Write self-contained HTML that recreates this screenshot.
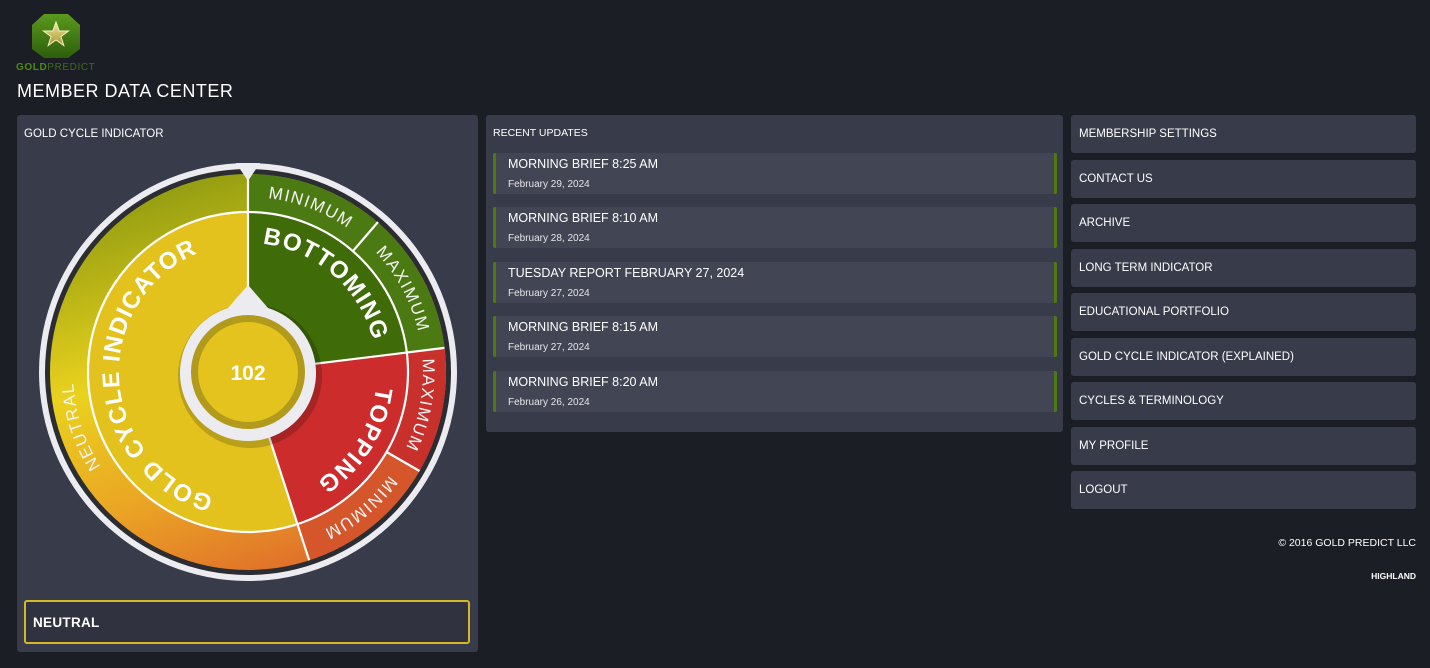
<!DOCTYPE html>
<html><head><meta charset="utf-8"><style>
*{margin:0;padding:0;box-sizing:border-box}
body{width:1430px;height:668px;background:#1c1e25;font-family:"Liberation Sans",sans-serif;color:#fff;position:relative;overflow:hidden}
.abs{position:absolute}
.panel{background:#383c4a;border-radius:3px}
.item{position:absolute;left:493px;width:564px;height:41px;background:#424654;border-left:3px solid #4c7a10;border-right:3px solid #4c7a10;border-radius:2px}
.item .t{position:absolute;left:12px;top:4px;font-size:12.5px}
.item .d{position:absolute;left:12px;top:26px;font-size:10px;color:#e6e6ea}
.btn{position:absolute;left:1071px;width:345px;height:38px;background:#383c4a;border-radius:3px;font-size:11.5px;padding:13px 0 0 8px}
</style></head><body>
<svg class="abs" style="left:30px;top:13px" width="52" height="46" viewBox="0 0 52 46">
<defs><linearGradient id="lg" x1="0" y1="0" x2="0" y2="1"><stop offset="0" stop-color="#5a9a1c"/><stop offset="1" stop-color="#2e5e0c"/></linearGradient>
<linearGradient id="st" x1="0" y1="0" x2="0" y2="1"><stop offset="0" stop-color="#efe8a0"/><stop offset="1" stop-color="#a8962a"/></linearGradient></defs>
<path d="M14 1 L38 1 L50 12 L50 36 L38 45 L14 45 L2 36 L2 12 Z" fill="url(#lg)"/>
<path d="M26 9 L29.2 18 L38.5 18 L31 23.6 L33.8 32.5 L26 27 L18.2 32.5 L21 23.6 L13.5 18 L22.8 18 Z" fill="url(#st)" stroke="#f4f0c8" stroke-width="1"/>
</svg>
<div class="abs" style="left:16px;top:62px;font-size:10px;letter-spacing:0.6px;color:#3e6a1c"><b style="color:#4c8a1a">GOLD</b>PREDICT</div>
<div class="abs" style="left:17px;top:81px;font-size:18px;letter-spacing:.5px">MEMBER DATA CENTER</div>

<div class="abs panel" style="left:17px;top:115px;width:461px;height:537px"></div>
<div class="abs" style="left:24px;top:128px;font-size:11.5px">GOLD CYCLE INDICATOR</div>
<svg class="abs" style="left:30px;top:152px" width="440" height="440" viewBox="0 0 440 440" font-family="Liberation Sans, sans-serif">
<defs>
<linearGradient id="band" x1="0.3" y1="0" x2="0.6" y2="1">
<stop offset="0" stop-color="#8e9a10"/><stop offset="0.45" stop-color="#ead21e"/><stop offset="0.75" stop-color="#eaa424"/><stop offset="1" stop-color="#e0702a"/></linearGradient>
<path id="outer" d="M218,45 A175,175 0 1 1 217.9,45"/>
<path id="inner" d="M218,91 A129,129 0 1 1 217.9,91"/>
</defs>
<circle cx="218" cy="220" r="209" fill="#ececf0"/>
<circle cx="218" cy="220" r="203" fill="#2c2d33"/>
<circle cx="218" cy="220" r="198" fill="url(#band)"/>
<path d="M218,220 L218,22 A198,198 0 0 1 414.5,195.9 Z" fill="#4c7a12"/>
<path d="M218,220 L414.5,195.9 A198,198 0 0 1 389.5,319 Z" fill="#c8302c"/>
<path d="M218,220 L389.5,319 A198,198 0 0 1 279.2,408.3 Z" fill="#d4562a"/>
<path d="M218,220 L218,60 A160,160 0 0 1 376.8,200.5 Z" fill="#3f6b08"/>
<path d="M218,220 L376.8,200.5 A160,160 0 0 1 267.4,372.2 Z" fill="#cc2c2c"/>
<path d="M218,220 L267.4,372.2 A160,160 0 1 1 218,60 Z" fill="#e3c21e"/>
<g stroke="#fff" stroke-width="2.2" fill="none">
<circle cx="218" cy="220" r="160"/>
<line x1="218" y1="220" x2="218" y2="22"/>
<line x1="218" y1="220" x2="414.5" y2="195.9"/>
<line x1="218" y1="220" x2="279.2" y2="408.3"/>
<line x1="323" y1="99" x2="348" y2="70"/>
<line x1="356.6" y1="300" x2="389.5" y2="319"/>
</g>
<g fill="#f4f4f4" font-size="17" letter-spacing="1.5">
<text><textPath href="#outer" startOffset="5.8%" text-anchor="middle">MINIMUM</textPath></text>
<text><textPath href="#outer" startOffset="17.2%" text-anchor="middle">MAXIMUM</textPath></text>
<text><textPath href="#outer" startOffset="28%" text-anchor="middle">MAXIMUM</textPath></text>
<text><textPath href="#outer" startOffset="39%" text-anchor="middle">MINIMUM</textPath></text>
<text><textPath href="#outer" startOffset="70%" text-anchor="middle">NEUTRAL</textPath></text>
</g>
<g fill="#fff" font-size="24" font-weight="bold" letter-spacing="1.2">
<text><textPath href="#inner" startOffset="11.5%" text-anchor="middle">BOTTOMING</textPath></text>
<text><textPath href="#inner" startOffset="34%" text-anchor="middle">TOPPING</textPath></text>
<text><textPath href="#inner" startOffset="74%" text-anchor="middle">GOLD CYCLE INDICATOR</textPath></text>
</g>
<circle cx="220" cy="224" r="72" fill="#000" opacity="0.18"/>
<path d="M218,133 L238,156 A68,68 0 1 1 198,156 Z" fill="#ececf0"/>
<circle cx="218" cy="220" r="57" fill="#b19a1c"/>
<circle cx="218" cy="220" r="50" fill="#e4c31e"/>
<text x="218" y="228" text-anchor="middle" font-size="21" font-weight="bold" fill="#fff">102</text>
<path d="M206,11 L230,11 L218,29 Z" fill="#ececf0"/>
</svg>
<div class="abs" style="left:24px;top:600px;width:446px;height:44px;border:2px solid #d4b826;border-radius:3px;background:#30323f;font-weight:bold;font-size:13.5px;padding:13px 0 0 7px;letter-spacing:.3px">NEUTRAL</div>

<div class="abs panel" style="left:486px;top:115px;width:577px;height:317px"></div>
<div class="abs" style="left:493px;top:127px;font-size:10.5px">RECENT UPDATES</div>
<div class="item" style="top:153px"><div class="t">MORNING BRIEF 8:25 AM</div><div class="d">February 29, 2024</div></div>
<div class="item" style="top:207px"><div class="t">MORNING BRIEF 8:10 AM</div><div class="d">February 28, 2024</div></div>
<div class="item" style="top:262px"><div class="t">TUESDAY REPORT FEBRUARY 27, 2024</div><div class="d">February 27, 2024</div></div>
<div class="item" style="top:316px"><div class="t">MORNING BRIEF 8:15 AM</div><div class="d">February 27, 2024</div></div>
<div class="item" style="top:371px"><div class="t">MORNING BRIEF 8:20 AM</div><div class="d">February 26, 2024</div></div>

<div class="btn" style="top:115px">MEMBERSHIP SETTINGS</div>
<div class="btn" style="top:160px">CONTACT US</div>
<div class="btn" style="top:204px">ARCHIVE</div>
<div class="btn" style="top:249px">LONG TERM INDICATOR</div>
<div class="btn" style="top:293px">EDUCATIONAL PORTFOLIO</div>
<div class="btn" style="top:338px">GOLD CYCLE INDICATOR (EXPLAINED)</div>
<div class="btn" style="top:382px">CYCLES &amp; TERMINOLOGY</div>
<div class="btn" style="top:427px">MY PROFILE</div>
<div class="btn" style="top:471px">LOGOUT</div>
<div class="abs" style="right:14px;top:537px;font-size:10.5px">© 2016 GOLD PREDICT LLC</div>
<div class="abs" style="right:14px;top:571px;font-size:8.5px;font-weight:bold">HIGHLAND</div>
</body></html>
